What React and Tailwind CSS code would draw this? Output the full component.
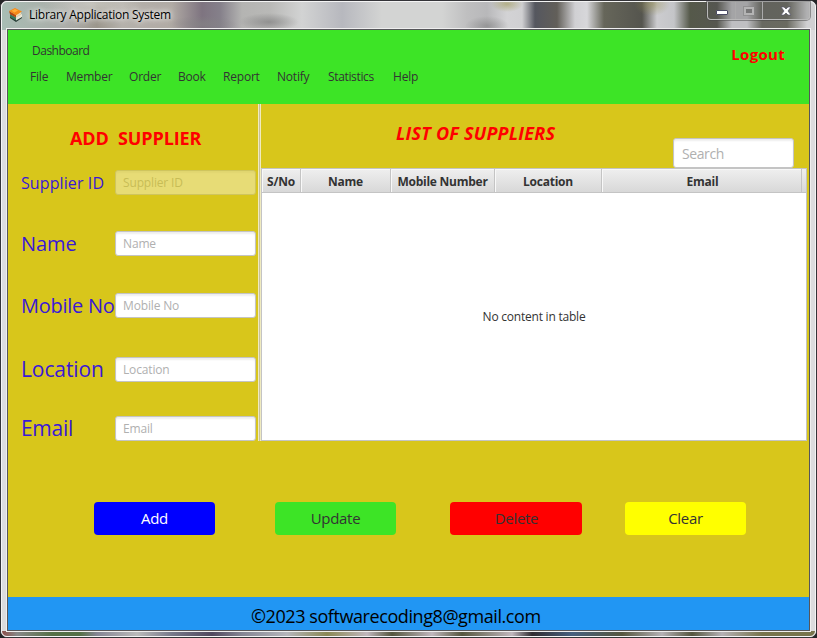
const field =
  "rounded-[3px] border border-[#c4c4c4] bg-white text-[#b0b0b0] shadow-[inset_0_2px_2px_#eeeeee] flex items-center";

const menu = [
  ["File", "w-[36px]"],
  ["Member", "w-[63px]"],
  ["Order", "w-[49px]"],
  ["Book", "w-[45px]"],
  ["Report", "w-[54px]"],
  ["Notify", "w-[51px]"],
  ["Statistics", "w-[65px] tracking-[-0.35px]"],
  ["Help", "w-[40px]"],
];

const rows = [
  ["Supplier ID", "mt-0 text-[16px] tracking-[0.1px]", true],
  ["Name", "mt-[36px] text-[20px] tracking-[-0.1px]", false],
  ["Mobile No", "mt-[37px] text-[20px] tracking-[-0.25px]", false],
  ["Location", "mt-[39px] text-[21px] tracking-[-0.1px]", false],
  ["Email", "mt-[34px] text-[21px] tracking-[-0.3px]", false],
];

const columns = [
  ["S/No", "w-[39px]"],
  ["Name", "w-[90px]"],
  ["Mobile Number", "w-[104px]"],
  ["Location", "w-[107px]"],
  ["Email", "w-[200px] pl-[2px]"],
];

const actions = [
  ["Add", "w-[121px] bg-[#0000ff] text-white"],
  ["Update", "ml-[60px] w-[121px] bg-[#3de426] text-[#333]"],
  ["Delete", "ml-[54px] w-[132px] bg-[#ff0000] pl-px text-[#333]"],
  ["Clear", "ml-[43px] w-[121px] bg-[#ffff00] text-[#333]"],
];

function BooksIcon() {
  return (
    <svg width="14" height="14" viewBox="0 0 14 14">
      <path d="M1 7l7 4 5-3v2l-6 4-6-4z" fill="#263c35" />
      <path d="M1 6l6 3.500v3L1 9z" fill="#397a5c" />
      <path d="M7 9.500l6-3.500v3l-6 3.500z" fill="#e9e6d5" />
      <path d="M0 3l7 4v2.500L1 6.200z" fill="#b54810" />
      <path d="M7 7l5-3v2.300L7 9.300z" fill="#efd9b0" />
      <path d="M0 3l6-3 7 3.500-6 3.800z" fill="#f58a18" />
      <path d="M2.500 2.700l3.500-1.700 3 1.400-3.500 2z" fill="#ffae3c" />
    </svg>
  );
}

function TitleBar() {
  return (
    <div className="flex h-[27px] items-start justify-between bg-[radial-gradient(ellipse_30px_9px_at_262px_20px,#77777799,transparent),radial-gradient(ellipse_35px_8px_at_195px_22px,#85858599,transparent),radial-gradient(ellipse_50px_14px_at_85px_2px,#dadad4aa,transparent),radial-gradient(ellipse_22px_10px_at_480px_24px,#77777788,transparent),radial-gradient(ellipse_16px_8px_at_500px_2px,#a29d62aa,transparent),radial-gradient(ellipse_18px_12px_at_645px_2px,#96905588,transparent)]">
      <div className="flex h-[25px] items-center pl-[2px]">
        <BooksIcon />
        <span className="ml-[6px] text-[12px] tracking-[-0.25px] text-black [text-shadow:0_0_5px_#fff,0_0_8px_#fff]">
          Library Application System
        </span>
      </div>
      <div className="flex h-[18px] w-[103px] rounded-b-[4px] border border-t-0 border-[#b9b9b9] bg-[#55555540] shadow-[0_0_0_1px_#45454580]">
        <div className="flex w-[28px] items-center justify-center border-r border-[#aaaaaa]">
          <div className="mt-[3px] h-[5px] w-[12px] rounded-[1px] border border-[#4a4a63] bg-white" />
        </div>
        <div className="flex w-[27px] items-center justify-center border-r border-[#aaaaaa]">
          <div className="h-[8px] w-[10px] border-2 border-[#b4b4b4] bg-[#777777] outline outline-[#85858599]" />
        </div>
        <div className="flex flex-1 items-center justify-center">
          <svg width="12" height="10" viewBox="0 0 12 10">
            <path
              d="M1 1h3l2 2 2-2h3L8 5l3 4H8L6 7 4 9H1l3-4z"
              fill="white"
              stroke="#555566"
              strokeWidth="0.7"
            />
          </svg>
        </div>
      </div>
    </div>
  );
}

export default function App() {
  return (
    <div className="h-[638px] w-[817px] bg-[#242426] font-['Open_Sans','Noto_Sans',sans-serif] text-[#333]">
      <div className="h-[638px] rounded-[7px] border border-[#343438] bg-[#dcdcde]">
        <div className="h-[636px] rounded-[6px] border border-[#f4f4f4] bg-[linear-gradient(90deg,#a8bdb4_0px,#aaaaa6_70px,#9b968c_95px,#b5b1ab_120px,#b0aaa4_170px,#7e7480_200px,#85808a_218px,#b4b4b2_240px,#b9b9b7_268px,#d2d3d3_300px,#b7b8be_340px,#d3d4d3_380px,#d3d4d3_440px,#bfbfc0_465px,#b8b8ba_485px,#d3d3d5_505px,#d0d0d2_520px,#55575f_533px,#625f59_555px,#d0d0d3_573px,#d7d7da_585px,#66665a_602px,#55554e_640px,#cccccf_655px,#c4c5c8_672px,#55594a_688px,#56574f_715px,#bfbfc2_730px,#bfbfc2_745px,#686961_760px,#6a6a60_785px,#d0d0d2_805px),linear-gradient(90deg,#8c4e49_0px,#888_15px,#557047_50px,#557047_78px,#858594_95px,#bababa_135px,#77798a_170px,#50485e_210px,#858594_240px,#b5b5bb_285px,#8a8855_325px,#c0b7bd_365px,#55563f_390px,#c0b7bd_430px,#55563f_460px,#c0b7bd_510px,#302c31_530px,#47607f_570px,#55563f_620px,#b5b1b5_660px,#55563f_690px,#b5b1b5_720px,#77744c_760px,#77744c_812px)] bg-[position:0_0,0_bottom] bg-[length:100%_28px,100%_5px] bg-no-repeat px-[5px]">
          <TitleBar />
          <main className="flex h-[602px] w-[803px] flex-col border border-[#56565a] bg-[#d8c61b] outline outline-[#efefef]">
            <header className="flex h-[74px] shrink-0 justify-between bg-[#3de426] text-[12px]">
              <div className="pl-[22px] pt-[12px]">
                <div className="h-[26px] pl-[2px] leading-[18px] tracking-[-0.5px]">Dashboard</div>
                <nav className="flex leading-[18px] tracking-[-0.2px]">
                  {menu.map(([name, width]) => (
                    <span key={name} className={width}>{name}</span>
                  ))}
                </nav>
              </div>
              <div className="pr-[24px] pt-[13px] text-[15px] font-bold leading-[22px] tracking-[0.3px] text-[#ff0000]">
                Logout
              </div>
            </header>
            <div className="flex h-[337px] shrink-0">
              <section className="w-[250px] pl-[13px]">
                <h1 className="h-[66px] whitespace-pre pl-[49px] pt-[22px] text-[18px] font-bold leading-[24px] tracking-[-0.1px] text-[#ff0000]">
                  {"ADD  SUPPLIER"}
                </h1>
                {rows.map(([name, style, disabled]) => (
                  <div key={name} className={"flex h-[25px] items-center whitespace-nowrap text-[#3a18d6] " + style}>
                    <span className="w-[94px] shrink-0">{name}</span>
                    <div className={field + " h-[25px] w-[141px] shrink-0 pl-[7px] text-[12px] tracking-[-0.15px]" + (disabled ? " opacity-40" : "")}>
                      {name}
                    </div>
                  </div>
                ))}
              </section>
              <div className="w-[3px] border-l border-r border-[#f0ebc0] bg-[#c9c19a]" />
              <section className="w-[546px]">
                <div className="flex h-[64px]">
                  <h2 className="w-[412px] pl-[135px] pt-[17px] text-[18px] font-bold italic leading-[24px] tracking-[0.22px] text-[#ff0000]">
                    LIST OF SUPPLIERS
                  </h2>
                  <div className={field + " mt-[34px] h-[30px] w-[121px] pl-[8px] text-[14px] tracking-[-0.4px]"}>
                    Search
                  </div>
                </div>
                <div className="flex h-[273px] flex-col border border-[#c4c4c4] bg-white">
                  <div className="flex h-[24px] shrink-0 border-b border-[#c4c4c4] bg-[linear-gradient(#efefef,#d8d8d8)] text-[12px] font-bold">
                    {columns.map(([name, width]) => (
                      <div key={name} className={"flex items-center justify-center whitespace-nowrap border-r border-[#c4c4c4] pt-[2px] tracking-[-0.25px] shadow-[inset_1px_1px_#f8f8f8] " + width}>
                        {name}
                      </div>
                    ))}
                  </div>
                  <div className="flex flex-1 items-center justify-center text-[12px] tracking-[-0.22px]">
                    No content in table
                  </div>
                </div>
              </section>
            </div>
            <div className="flex h-[156px] shrink-0 pl-[86px] pt-[61px]">
              {actions.map(([name, style]) => (
                <button key={name} className={"flex h-[33px] items-center justify-center rounded-[4px] text-[15px] tracking-[-0.3px] " + style}>
                  {name}
                </button>
              ))}
            </div>
            <footer className="flex h-[33px] shrink-0 bg-[#2196f3] pl-[243px] pt-[6px] text-[18px] leading-[26px] tracking-[-0.42px] text-black">
              ©2023 softwarecoding8@gmail.com
            </footer>
          </main>
        </div>
      </div>
    </div>
  );
}
